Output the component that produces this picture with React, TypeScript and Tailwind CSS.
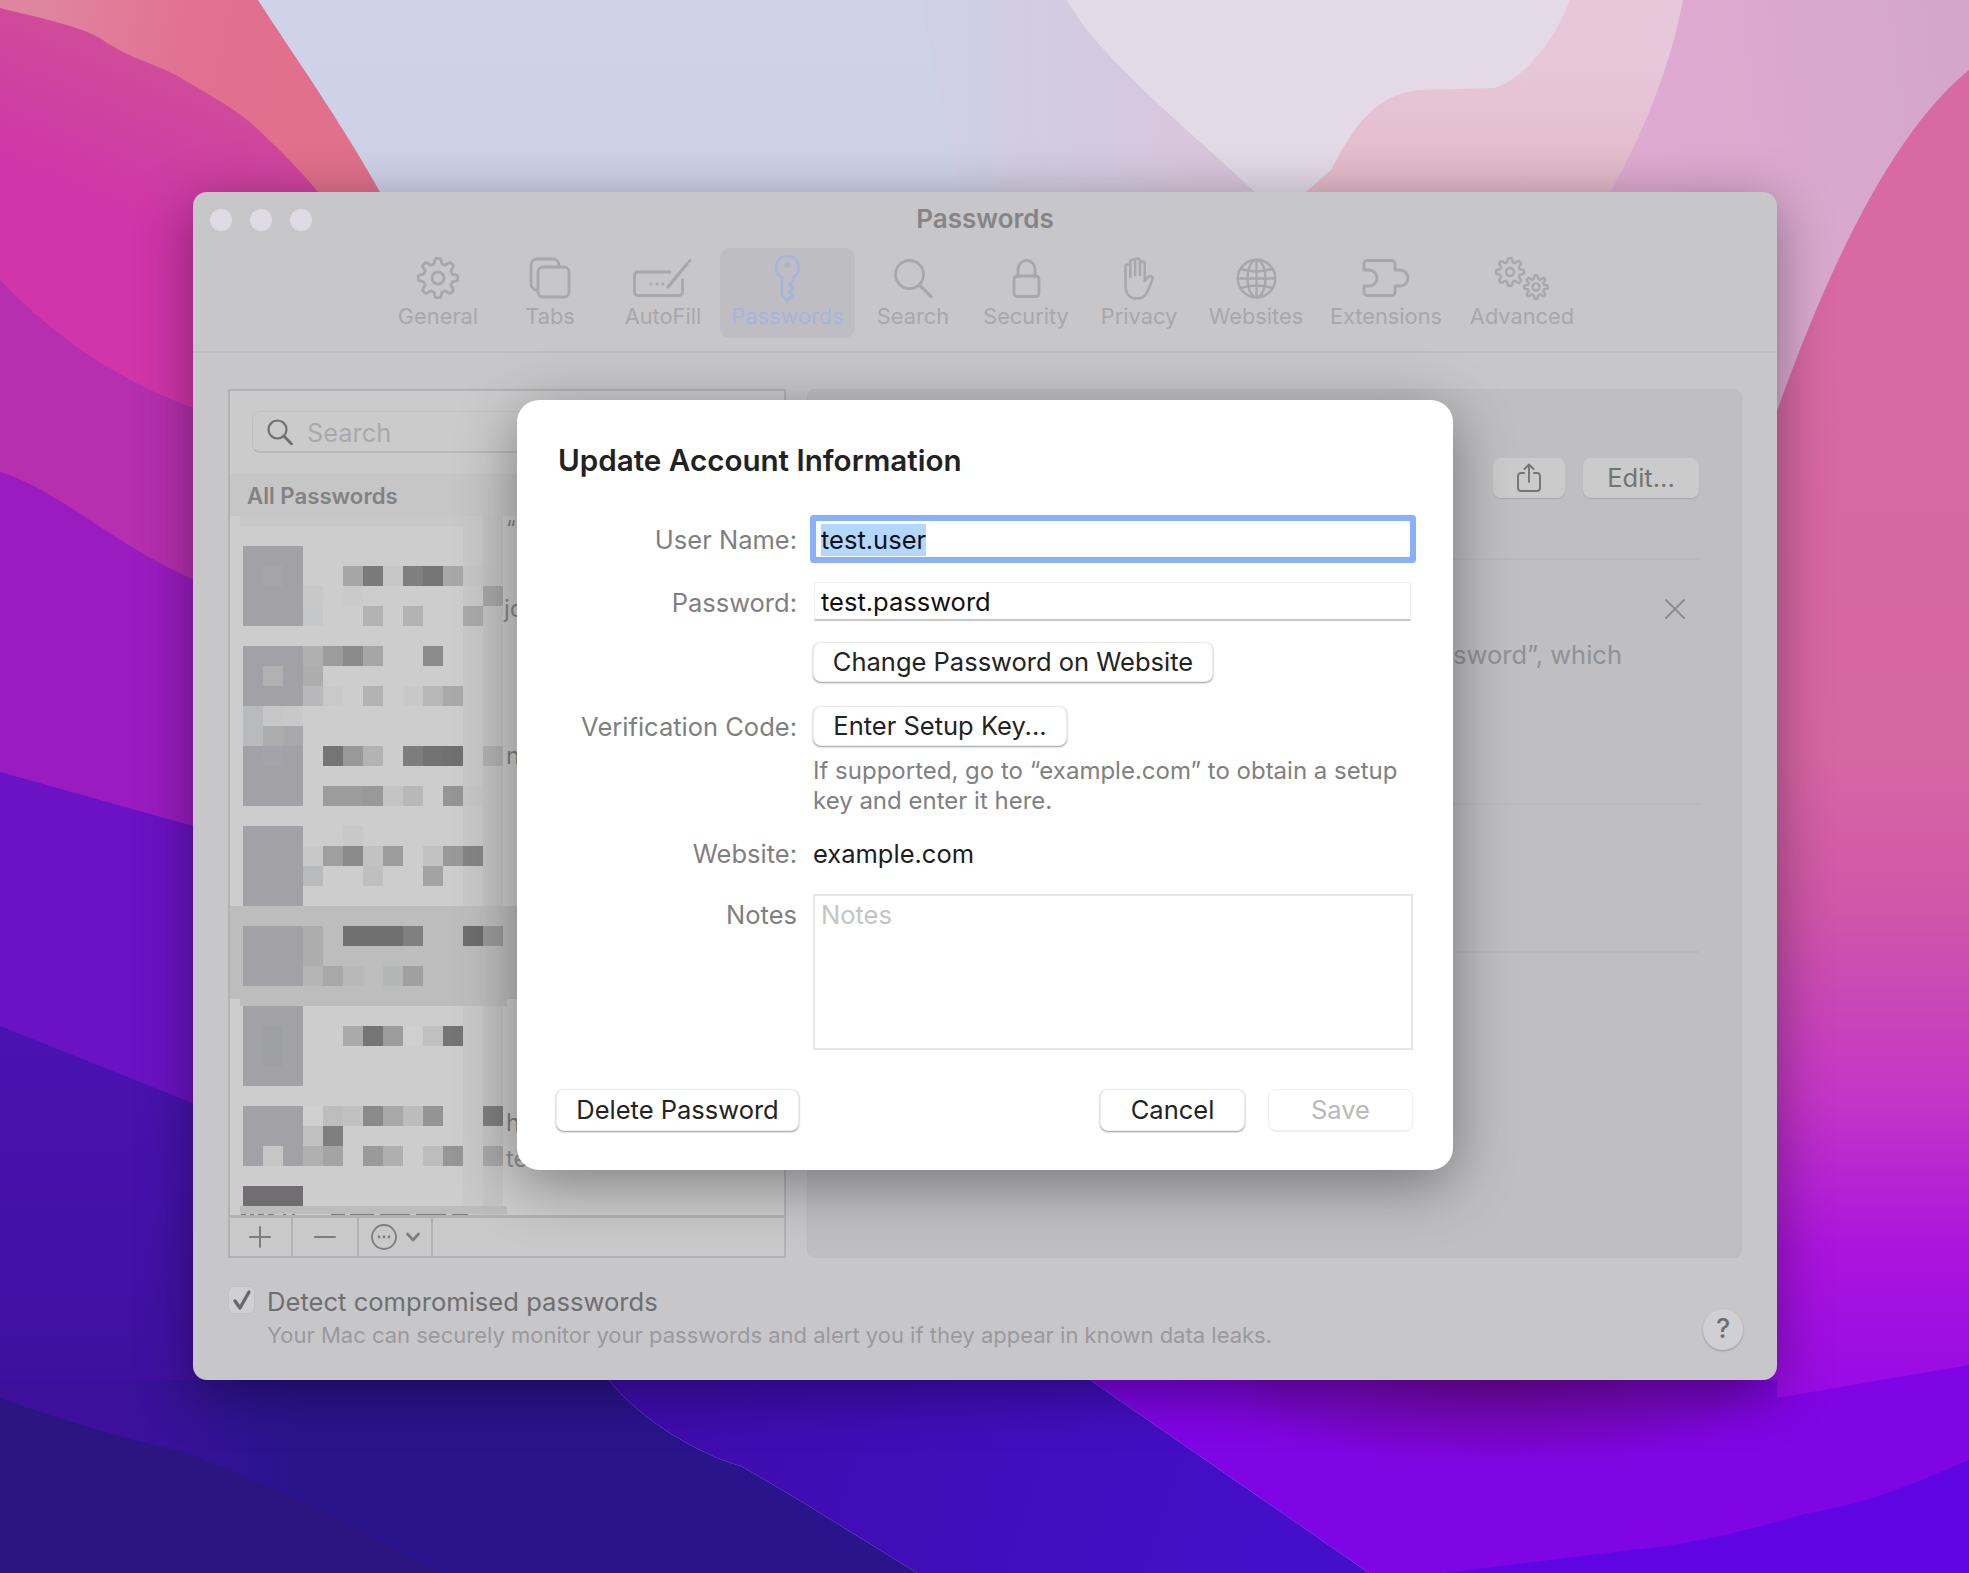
import React from "react";

const F = { fontFamily: "Inter, 'Liberation Sans', sans-serif" };

function gearPath(cx: number, cy: number, R: number, amp: number, n: number) {
  const pts: string[] = [];
  const N = 120;
  for (let i = 0; i < N; i++) {
    const t = (i / N) * Math.PI * 2;
    const c = Math.cos(n * t);
    const s = Math.max(-1, Math.min(1, c * 1.8));
    const r = R + amp * s;
    pts.push(`${(cx + r * Math.sin(t)).toFixed(2)},${(cy - r * Math.cos(t)).toFixed(2)}`);
  }
  return "M" + pts.join("L") + "Z";
}

const S = { fill: "none", stroke: "currentColor", strokeWidth: 2.8, strokeLinecap: "round", strokeLinejoin: "round" } as const;

const icons: Record<string, React.ReactNode> = {
  General: (
    <svg width="42" height="42" viewBox="0 0 42 42" {...S}>
      <path d={gearPath(21, 21, 17.2, 2.6, 8)} />
      <circle cx="21" cy="21" r="6" />
    </svg>
  ),
  Tabs: (
    <svg width="42" height="42" viewBox="0 0 42 42" {...S}>
      <path d="M8 33 A6 6 0 0 1 2 27 V8 A6 6 0 0 1 8 2 H24 A6 6 0 0 1 30 8 V10" />
      <rect x="9" y="10" width="31" height="30" rx="5" />
    </svg>
  ),
  AutoFill: (
    <svg width="60" height="38" viewBox="0 0 60 38" {...S}>
      <path d="M37 13 H5 A3.5 3.5 0 0 0 1.5 16.5 V33 A3.5 3.5 0 0 0 5 36.5 H46 A3.5 3.5 0 0 0 49.5 33 V21" />
      <path d="M35 28 L54 5" strokeWidth="3.4" />
      <path d="M56 2.5 L57 1.5" strokeWidth="3" />
      <circle cx="18" cy="25" r="1.6" fill="currentColor" stroke="none" />
      <circle cx="24" cy="25" r="1.6" fill="currentColor" stroke="none" />
      <circle cx="30" cy="25" r="1.6" fill="currentColor" stroke="none" />
    </svg>
  ),
  Passwords: (
    <svg width="27" height="49" viewBox="0 0 27 49" {...S}>
      <path d="M8 23.5 A11.5 11.5 0 1 1 19 23.5 V27 L15.5 30.5 L19 34 L15.5 37.5 L19 41 L13.5 47 L8 41 Z" />
      <circle cx="13.5" cy="11" r="2.8" fill="currentColor" stroke="none" />
    </svg>
  ),
  Search: (
    <svg width="39" height="39" viewBox="0 0 39 39" {...S}>
      <circle cx="15.5" cy="15.5" r="14" />
      <path d="M25.5 26 L37 37.5" strokeWidth="3.2" />
    </svg>
  ),
  Security: (
    <svg width="29" height="39" viewBox="0 0 29 39" {...S}>
      <path d="M6 18 V10 A8.5 8.5 0 0 1 23 10 V18" />
      <rect x="2" y="17" width="25" height="20.5" rx="3" />
    </svg>
  ),
  Privacy: (
    <svg width="32" height="43" viewBox="0 0 32 43" {...S} strokeWidth="2.5">
      <path d="M2.5 26 V10 A2.4 2.4 0 0 1 7.3 10 V20 M7.3 18 V5 A2.4 2.4 0 0 1 12.1 5 V18 M12.1 18 V4 A2.4 2.4 0 0 1 16.9 4 V18 M16.9 18 V7 A2.4 2.4 0 0 1 21.7 7 V24 L25 20 C26.5 18 30.5 19 29.5 22 C28 26 26 32 23 37 C21 40.5 18 41.5 13.5 41.5 C6 41.5 2.5 36 2.5 28 V26" />
    </svg>
  ),
  Websites: (
    <svg width="41" height="41" viewBox="0 0 41 41" {...S} strokeWidth="2.4">
      <circle cx="20.5" cy="20.5" r="18.8" />
      <ellipse cx="20.5" cy="20.5" rx="9" ry="18.8" />
      <path d="M20.5 2 V39 M2 20.5 H39 M5 11 Q20.5 16 36 11 M5 30 Q20.5 25 36 30" />
    </svg>
  ),
  Extensions: (
    <svg width="48" height="39" viewBox="0 0 48 39" {...S}>
      <path d="M5 1.5 H30 A3 3 0 0 1 33 4.5 V11 H38 A8 8 0 0 1 38 27 H33 V33.5 A3 3 0 0 1 30 36.5 H5 A3 3 0 0 1 2 33.5 V27 H7 A8 8 0 0 0 7 11 H2 V4.5 A3 3 0 0 1 5 1.5 Z" />
    </svg>
  ),
  Advanced: (
    <svg width="55" height="43" viewBox="0 0 55 43" fill="none" stroke="currentColor" strokeWidth="2.4" strokeLinejoin="round">
      <path d={gearPath(15, 15, 12, 2, 8)} />
      <circle cx="15" cy="15" r="4" />
      <path d={gearPath(41, 30, 10, 1.8, 8)} />
      <circle cx="41" cy="30" r="3.6" />
    </svg>
  ),
};

const tabs: [string, string][] = [
  ["General", "w-[112px]"],
  ["Tabs", "w-[112px]"],
  ["AutoFill", "w-[114px]"],
  ["Passwords", "w-[135px]"],
  ["Search", "w-[116px]"],
  ["Security", "w-[110px]"],
  ["Privacy", "w-[116px]"],
  ["Websites", "w-[118px]"],
  ["Extensions", "w-[142px]"],
  ["Advanced", "w-[130px]"],
];

const A = "#a2a1a5";
type Cell = [number, string];
const rows: [number, string[] | null, Cell[]][] = [
  [546, [A, A, A], []],
  [566, [A, "#a5a4aa", A], [[5, "#a6a6a6"], [6, "#7a7a7a"], [7, "#c6c6c6"], [8, "#7f7f7f"], [9, "#757575"], [10, "#a8a8a8"], [11, "#c6c6c6"], [12, "#c4c4c4"]]],
  [586, [A, A, A], [[3, "#c8c8c8"], [5, "#cacaca"], [12, "#a8a8a8"]]],
  [606, [A, A, A], [[3, "#c5c7c9"], [6, "#b3b3b3"], [8, "#b3b3b3"], [11, "#aaaaaa"]]],
  [646, [A, A, A], [[3, "#b0b0b0"], [4, "#9c9c9c"], [5, "#8b8b8b"], [6, "#a6a6a6"], [9, "#8c8c8c"]]],
  [666, [A, "#b1b1b1", A], [[3, "#adadad"]]],
  [686, [A, A, A], [[3, "#b8b8ba"], [4, "#c9c9c9"], [6, "#b3b3b3"], [8, "#c8c8c8"], [9, "#b8b8b8"], [10, "#a9a9a9"]]],
  [706, ["#b8babc", "#c6c6c6", "#c8c8c8"], []],
  [726, ["#b8babc", "#adadad", "#a8a8ab"], []],
  [746, [A, "#a3a3a9", A], [[4, "#757575"], [5, "#999999"], [6, "#b3b3b3"], [8, "#7d7d7d"], [9, "#727272"], [10, "#707070"], [12, "#b3b3b3"]]],
  [766, [A, A, A], []],
  [786, [A, A, A], [[4, "#9c9c9c"], [5, "#9c9c9c"], [6, "#999999"], [7, "#c4c4c4"], [8, "#b8b8b8"], [10, "#969696"], [11, "#c6c6c6"]]],
  [826, [A, A, A], [[5, "#c8c8c8"]]],
  [846, [A, A, A], [[3, "#c8c8c8"], [4, "#9f9f9f"], [5, "#8b8b8b"], [6, "#c2c2c2"], [7, "#9c9c9c"], [9, "#c2c2c2"], [10, "#999999"], [11, "#858585"]]],
  [866, [A, A, A], [[3, "#b8babc"], [6, "#bfbfbf"], [9, "#a3a3a3"]]],
  [886, [A, A, A], []],
  [926, [A, A, A], [[3, "#adadad"], [5, "#707070"], [6, "#707070"], [7, "#707070"], [8, "#808080"], [11, "#6e6e6e"], [12, "#9a9a9a"]]],
  [946, [A, A, A], [[3, "#adadad"]]],
  [966, [A, A, A], [[3, "#b5b5b5"], [4, "#a8a8a8"], [5, "#b8b8b8"], [7, "#b4b6b6"], [8, "#a0a0a0"]]],
  [1006, [A, A, A], []],
  [1026, [A, "#9d9fa3", A], [[5, "#aaaaaa"], [6, "#757575"], [7, "#9c9c9c"], [8, "#cfcfcf"], [9, "#c0c0c0"], [10, "#757575"]]],
  [1046, [A, "#9d9fa3", A], []],
  [1066, [A, A, A], []],
  [1106, [A, A, A], [[3, "#cfcfcf"], [4, "#bdbdbd"], [5, "#c1c1c1"], [6, "#8a8a8a"], [7, "#a8a8a8"], [8, "#bcbcbc"], [9, "#949494"], [12, "#7f7f7f"]]],
  [1126, [A, A, A], [[3, "#c0c0c0"], [4, "#7f7f7f"]]],
  [1146, [A, "#c6c6c6", A], [[3, "#b0b0b0"], [4, "#a4a4a4"], [6, "#9a9a9a"], [7, "#afafaf"], [8, "#cdcdcd"], [9, "#bdbdbd"], [10, "#969696"], [12, "#a8a8a8"]]],
  [1186, ["#706e70", "#706e70", "#706e70"], []],
];

function Mosaic() {
  return (
    <svg className="absolute inset-0 w-full h-full" viewBox="230 516 554 699" preserveAspectRatio="none" shapeRendering="crispEdges">
      <rect x="240" y="516" width="263" height="10" fill="#c8c8c8" />
      <rect x="463" y="516" width="20" height="699" fill="#c9c9c9" />
      <rect x="483" y="516" width="20" height="699" fill="#c5c5c5" />
      <rect x="230" y="906" width="290" height="93" fill="#bdbdbd" />
      <rect x="240" y="906" width="267" height="100" fill="#bdbdbd" />
      {rows.map(([y, av, cells]) => (
        <g key={y}>
          {av && av.map((c, i) => <rect key={i} x={243 + i * 20} y={y} width="20" height="20" fill={c} />)}
          {cells.map(([i, c]) => <rect key={i} x={243 + i * 20} y={y} width="20" height="20" fill={c} />)}
        </g>
      ))}
      <rect x="240" y="1206" width="267" height="8" fill="#bcbcbc" />
      <path d="M241 1214h5v1h-5zM250 1214h4v1h-4zM258 1214h6v1h-6zM268 1214h6v1h-6zM283 1214h3v1h-3zM292 1214h3v1h-3zM331 1214h14v1h-14zM350 1214h24v1h-24zM380 1214h30v1h-30zM416 1214h30v1h-30zM452 1214h16v1h-16z" fill="#7a7a7a" />
    </svg>
  );
}

function Wallpaper() {
  return (
    <svg className="absolute inset-0 w-full h-full" viewBox="0 0 1969 1573" preserveAspectRatio="none">
      <defs>
        <linearGradient id="sky" x1="0" x2="0" y1="0" y2="1">
          <stop offset="0" stopColor="#cfd3e9" />
          <stop offset="1" stopColor="#c2c2de" />
        </linearGradient>
        <linearGradient id="sky2" gradientUnits="userSpaceOnUse" x1="900" x2="1200" y1="0" y2="0">
          <stop offset="0" stopColor="#ced1e7" />
          <stop offset="1" stopColor="#d8c6dc" />
        </linearGradient>
        <linearGradient id="peak" gradientUnits="userSpaceOnUse" x1="0" x2="0" y1="60" y2="192">
          <stop offset="0" stopColor="#e7c7da" />
          <stop offset="1" stopColor="#e3b9c9" />
        </linearGradient>
        <linearGradient id="lilac" gradientUnits="userSpaceOnUse" x1="1650" x2="1969" y1="100" y2="60">
          <stop offset="0" stopColor="#dfaad1" />
          <stop offset="1" stopColor="#d4a6cc" />
        </linearGradient>
        <linearGradient id="coral" gradientUnits="userSpaceOnUse" x1="40" x2="300" y1="0" y2="60">
          <stop offset="0" stopColor="#df85a0" />
          <stop offset="0.6" stopColor="#e27090" />
          <stop offset="1" stopColor="#e0708c" />
        </linearGradient>
        <linearGradient id="magenta" gradientUnits="userSpaceOnUse" x1="60" x2="0" y1="20" y2="160">
          <stop offset="0" stopColor="#cf4c9a" />
          <stop offset="1" stopColor="#d035a9" />
        </linearGradient>
        <linearGradient id="dpurple" gradientUnits="userSpaceOnUse" x1="0" x2="0" y1="1026" y2="1450">
          <stop offset="0" stopColor="#4a12b2" />
          <stop offset="1" stopColor="#3d109c" />
        </linearGradient>
        <linearGradient id="navy" gradientUnits="userSpaceOnUse" x1="110" x2="300" y1="0" y2="0">
          <stop offset="0" stopColor="#3d109c" />
          <stop offset="1" stopColor="#29148c" />
        </linearGradient>
        <linearGradient id="blue" gradientUnits="userSpaceOnUse" x1="700" x2="1250" y1="1400" y2="1573">
          <stop offset="0" stopColor="#3f0cae" />
          <stop offset="1" stopColor="#440fc8" />
        </linearGradient>
        <linearGradient id="rightv" gradientUnits="userSpaceOnUse" x1="0" x2="0" y1="100" y2="1410">
          <stop offset="0" stopColor="#d86aa3" />
          <stop offset="0.5" stopColor="#d766a4" />
          <stop offset="0.62" stopColor="#cf56a9" />
          <stop offset="0.76" stopColor="#c436c6" />
          <stop offset="0.88" stopColor="#aa14dd" />
          <stop offset="1" stopColor="#950ae6" />
        </linearGradient>
        <radialGradient id="dim">
          <stop offset="0" stopColor="#6a0a70" stopOpacity="0.55" />
          <stop offset="0.65" stopColor="#6a0a90" stopOpacity="0.3" />
          <stop offset="1" stopColor="#7f05e4" stopOpacity="0" />
        </radialGradient>
      </defs>
      <rect width="1969" height="1573" fill="url(#sky)" />
      <path d="M920 0 H1067 C1100 60 1190 130 1255 192 H960 Z" fill="url(#sky2)" />
      <path d="M1067 0 H1683 L1610 192 H1255 C1190 130 1100 60 1067 0 Z" fill="#e3d9e7" />
      <path d="M1306 192 L1331 170 C1350 135 1370 95 1419 90 L1494 88 C1520 80 1550 50 1570 0 H1683 C1670 70 1640 140 1610 192 Z" fill="url(#peak)" />
      <path d="M1683 0 H1969 V420 H1610 V192 C1640 140 1670 70 1683 0 Z" fill="url(#lilac)" />

      <path d="M0 0 H258 C290 50 340 120 380 192 V420 H0 Z" fill="url(#coral)" />
      <path d="M0 8 C40 18 90 28 107 43 C135 60 150 62 176 75 C200 90 230 105 251 123 C280 150 300 170 318 192 L420 500 H0 Z" fill="url(#magenta)" />
      <path d="M0 280 C67 350 133 385 193 408 L420 430 V800 H0 Z" fill="#b52fae" />
      <path d="M0 472 C60 490 120 550 200 582 H420 V900 H0 Z" fill="#9a1cc0" />
      <path d="M0 772 L200 828 H420 V1200 H0 Z" fill="#6a12c4" />
      <path d="M0 1026 L200 1106 H420 V1573 H0 Z" fill="url(#dpurple)" />
      <path d="M0 1380 H609 C640 1420 700 1455 741 1466 L804 1503 L917 1573 H0 Z" fill="url(#navy)" />
      <path d="M0 1398 C60 1420 130 1440 188 1453 L314 1506 L440 1573 H0 Z" fill="#2c1580" />
      <path d="M1090 1340 H1969 V1573 H1369 L1090 1380 Z" fill="#7f05e4" />
      <ellipse cx="1500" cy="1380" rx="340" ry="95" fill="url(#dim)" />
      <path d="M609 1380 H1090 L1369 1573 H917 L804 1503 L741 1466 C700 1455 640 1420 609 1380 Z" fill="url(#blue)" />
      <path d="M1969 70 Q1870 150 1777 411 L1700 500 V1380 H1777 V1398 L1969 1365 Z" fill="url(#rightv)" />
      <path d="M1969 1460 C1900 1490 1860 1505 1808 1513 C1750 1530 1690 1545 1632 1550 L1444 1573 H1969 Z" fill="#5f05e4" />
    </svg>
  );
}

function DlgButton({ className, children }: { className: string; children: React.ReactNode }) {
  return (
    <div className={`flex items-center justify-center rounded-lg bg-white border border-[#ececec] shadow-[0_1px_2px_rgba(0,0,0,0.4)] text-[25.5px] text-[#232323] ${className}`}>
      {children}
    </div>
  );
}

function Row({ label, children, className = "" }: { label: string; children: React.ReactNode; className?: string }) {
  return (
    <div className={`flex items-center ${className}`}>
      <div className="w-[241px] shrink-0 text-right text-[25.5px] leading-[32px] pt-[2px] text-[#7f7f7f]">{label}</div>
      <div className="ml-[16px]">{children}</div>
    </div>
  );
}

export default function App() {
  return (
    <div className="relative w-[1969px] h-[1573px] overflow-hidden" style={F}>
      <Wallpaper />

      {/* Window */}
      <div className="absolute left-[193px] top-[192px] w-[1584px] h-[1188px] rounded-[14px] bg-[#c7c6c9] flex flex-col overflow-hidden shadow-[0_12px_55px_rgba(0,0,0,0.38)]">
        {/* title bar */}
        <div className="h-[56px] grid grid-cols-3 items-center shrink-0">
          <div className="flex gap-[18px] pl-[17px]">
            <div className="w-[22px] h-[22px] rounded-full bg-[#dfdbe4]" />
            <div className="w-[22px] h-[22px] rounded-full bg-[#dfdbe4]" />
            <div className="w-[22px] h-[22px] rounded-full bg-[#dfdbe4]" />
          </div>
          <div className="text-center text-[26px] leading-[34px] pb-[2px] font-semibold text-[#858587]">Passwords</div>
        </div>

        {/* toolbar */}
        <div className="h-[105px] shrink-0 border-b-2 border-[#bdbcbf] flex pl-[189px]">
          {tabs.map(([name, w]) => {
            const active = name === "Passwords";
            return (
              <div key={name} className={`${w} h-[90px] flex flex-col items-center rounded-[10px] ${active ? "bg-[#bebdc2] text-[#a6b5dc]" : "text-[#a8a8aa]"}`}>
                <div className="h-[60px] flex items-center justify-center">{icons[name]}</div>
                <div className="-mt-[4px] text-[21.8px] leading-[24px] whitespace-nowrap">{name}</div>
              </div>
            );
          })}
        </div>

        {/* main */}
        <div className="flex gap-[21px] px-[35px] pt-[36px] shrink-0">
          {/* list panel */}
          <div className="w-[558px] h-[869px] border-2 border-[#b2b1b3] bg-[#cdcdce] flex flex-col shrink-0">
            <div className="h-[83px] pt-[20px] pl-[22px] shrink-0 bg-[#cbcbcc]">
              <div className="w-[420px] h-[42px] rounded-lg border border-[#c0c0c1] border-b-2 border-b-[#b8b8ba] flex items-center pl-[14px] gap-[14px]">
                <svg width="26" height="26" viewBox="0 0 26 26" fill="none" stroke="#6f6f70" strokeWidth="2.2" strokeLinecap="round">
                  <circle cx="10.5" cy="10.5" r="9" />
                  <path d="M17 17 L24.5 25" strokeWidth="2.8" />
                </svg>
                <span className="text-[25.4px] leading-[32px] pt-[2px] text-[#a9a9aa]">Search</span>
              </div>
            </div>
            <div className="h-[42px] pt-[2px] shrink-0 bg-[#c6c6c7] flex items-center pl-[17px] text-[22.2px] font-semibold text-[#828283]">All Passwords</div>
            <div className="relative flex-1 overflow-hidden bg-[#cdcdcd]">
              <Mosaic />
              <span className="absolute left-[276px] top-[-4px] text-[22px] text-[#858585]">“</span>
              <span className="absolute left-[274px] top-[75px] text-[24px] text-[#888888]">jo</span>
              <span className="absolute left-[276px] top-[222px] text-[24px] text-[#808080]">n</span>
              <span className="absolute left-[276px] top-[589px] text-[24px] text-[#808080]">h</span>
              <span className="absolute left-[276px] top-[625px] text-[24px] text-[#8f8f8f]">te</span>
            </div>
            <div className="h-[41px] shrink-0 border-t-[3px] border-[#b2b1b3] bg-[#c9c9ca] flex text-[#7d7d7e]">
              <div className="w-[63px] pr-[2px] border-r-2 border-[#b2b1b3] flex items-center justify-center">
                <svg width="22" height="22" viewBox="0 0 22 22" stroke="currentColor" strokeWidth="2" strokeLinecap="round"><path d="M11 1 V21 M1 11 H21" /></svg>
              </div>
              <div className="w-[66px] border-r-2 border-[#b2b1b3] flex items-center justify-center">
                <svg width="22" height="22" viewBox="0 0 22 22" stroke="currentColor" strokeWidth="2" strokeLinecap="round"><path d="M1 11 H21" /></svg>
              </div>
              <div className="w-[74px] border-r-2 border-[#b2b1b3] flex items-center pl-[12px] gap-[9px]">
                <svg width="26" height="26" viewBox="0 0 26 26" fill="none" stroke="currentColor" strokeWidth="1.8">
                  <circle cx="13" cy="13" r="12" />
                  <circle cx="8" cy="13" r="1.4" fill="currentColor" stroke="none" />
                  <circle cx="13" cy="13" r="1.4" fill="currentColor" stroke="none" />
                  <circle cx="18" cy="13" r="1.4" fill="currentColor" stroke="none" />
                </svg>
                <svg width="14" height="10" viewBox="0 0 14 10" fill="none" stroke="currentColor" strokeWidth="2.6" strokeLinecap="round" strokeLinejoin="round"><path d="M1.5 2 L7 8 L12.5 2" /></svg>
              </div>
            </div>
          </div>

          {/* detail panel */}
          <div className="flex-1 h-[869px] rounded-lg bg-[#bfbec1] border border-[#bcbbbe] flex flex-col pl-[28px] pr-[42px]">
            <div className="flex justify-end gap-[18px] pt-[68px]">
              <div className="w-[72px] h-[40px] rounded-lg bg-[#cbcbcc] shadow-[0_1px_1px_rgba(0,0,0,0.12)] flex items-center justify-center text-[#757576]">
                <svg width="24" height="30" viewBox="0 0 24 30" fill="none" stroke="currentColor" strokeWidth="1.9" strokeLinecap="round" strokeLinejoin="round">
                  <path d="M7 10 H4 A3 3 0 0 0 1 13 V25 A3 3 0 0 0 4 28 H20 A3 3 0 0 0 23 25 V13 A3 3 0 0 0 20 10 H17" />
                  <path d="M12 19 V1.5 M7.5 6 L12 1.5 L16.5 6" />
                </svg>
              </div>
              <div className="w-[116px] h-[40px] rounded-lg bg-[#cbcbcc] shadow-[0_1px_1px_rgba(0,0,0,0.12)] flex items-center justify-center text-[25.5px] text-[#737374]">Edit...</div>
            </div>
            <div className="h-[2px] bg-[#b9b8bb] mt-[60px] shrink-0" />
            <div className="h-[243px] shrink-0 flex flex-col items-end">
              <svg className="mt-[39px] mr-[14px]" width="20" height="20" viewBox="0 0 20 20" stroke="#8c8c8e" strokeWidth="1.8" strokeLinecap="round"><path d="M1 1 L19 19 M19 1 L1 19" /></svg>
              <div className="mt-[20px] mr-[77px] text-[25.5px] leading-[32px] text-[#919193] whitespace-nowrap">password”, which</div>
            </div>
            <div className="h-[2px] bg-[#b9b8bb] shrink-0" />
            <div className="h-[146px] shrink-0" />
            <div className="h-[2px] bg-[#b9b8bb] shrink-0" />
          </div>
        </div>

        {/* footer */}
        <div className="flex justify-between pl-[35px] pr-[34px] pt-[28px]">
          <div className="flex">
            <div className="w-[27px] h-[28px] rounded-md bg-[#d0cfd1] border border-[#c0c0c1] flex items-center justify-center">
              <svg width="20" height="22" viewBox="0 0 20 22" fill="none" stroke="#6a6a6b" strokeWidth="3.4" strokeLinecap="round" strokeLinejoin="round"><path d="M3 12 L8 19 L17 3" /></svg>
            </div>
            <div className="ml-[12px]">
              <div className="text-[25.6px] leading-[32px] text-[#6f6f70]">Detect compromised passwords</div>
              <div className="mt-[2px] text-[22px] leading-[30px] text-[#9a9a9c]">Your Mac can securely monitor your passwords and alert you if they appear in known data leaks.</div>
            </div>
          </div>
          <div className="mt-[23px] w-[40px] h-[41px] rounded-full bg-[#d0cfd1] shadow-[0_1px_2px_rgba(0,0,0,0.25)] flex items-center justify-center text-[27px] font-medium text-[#6f6f70]">?</div>
        </div>
      </div>

      {/* Dialog */}
      <div className="absolute left-[517px] top-[400px] w-[936px] h-[770px] rounded-[22px] bg-white shadow-[0_14px_60px_rgba(0,0,0,0.38)] pt-[40px] pl-[39px] pr-[40px] flex flex-col">
        <div className="ml-[2px] h-[40px] flex items-center text-[29.6px] font-semibold text-[#222222] whitespace-nowrap">Update Account Information</div>

        <Row label="User Name:" className="mt-[41px] h-[36px]">
          <div className="ml-[3px] w-[594px] h-[36px] bg-white rounded-[1px] ring-[6px] ring-[#8ab0f9] flex items-center pl-[5px] pt-[2px] text-[25.5px] text-[#111111]">
            <span className="bg-[#b3d7ff] h-[32px] leading-[32px]">test.user</span>
          </div>
        </Row>
        <Row label="Password:" className="mt-[25px] h-[39px]">
          <div className="ml-[1px] w-[597px] h-[39px] border border-[#eeeeee] border-b-2 border-b-[#c8c8c8] flex items-center pl-[6px] pt-[2px] text-[25.5px] text-[#111111]">test.password</div>
        </Row>
        <div className="mt-[21px] ml-[257px]">
          <DlgButton className="w-[400px] h-[40px]">Change Password on Website</DlgButton>
        </div>
        <Row label="Verification Code:" className="mt-[24px] h-[40px]">
          <DlgButton className="w-[254px] h-[40px]">Enter Setup Key...</DlgButton>
        </Row>
        <div className="mt-[10px] ml-[257px] text-[24px] leading-[30px] text-[#808080] w-[600px]">
          <div className="whitespace-nowrap">If supported, go to “example.com” to obtain a setup</div>
          <div>key and enter it here.</div>
        </div>
        <Row label="Website:" className="mt-[22px] h-[30px]">
          <div className="text-[25.5px] leading-[32px] pt-[2px] text-[#1d1d1d]">example.com</div>
        </Row>
        <div className="mt-[26px] flex">
          <div className="w-[241px] shrink-0 pt-[5px] text-right text-[25.5px] leading-[32px] text-[#7f7f7f]">Notes</div>
          <div className="ml-[16px] w-[600px] h-[156px] border-2 border-[#e6e6e6] pl-[6px] pt-[3px] text-[25.5px] leading-[32px] text-[#c4c4c4]">Notes</div>
        </div>
        <div className="mt-[39px] flex items-center">
          <DlgButton className="w-[243px] h-[42px]">Delete Password</DlgButton>
          <div className="flex-1" />
          <DlgButton className="w-[145px] h-[42px]">Cancel</DlgButton>
          <div className="ml-[23px] w-[145px] h-[42px] rounded-lg border border-[#efefef] shadow-[0_1px_1px_rgba(0,0,0,0.08)] flex items-center justify-center text-[25.5px] text-[#b9b9b9]">Save</div>
        </div>
      </div>
    </div>
  );
}
